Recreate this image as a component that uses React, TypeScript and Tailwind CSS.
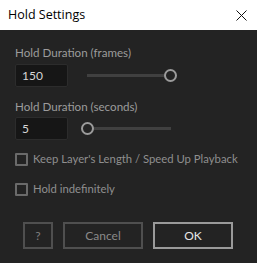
import React from 'react';

const font = { fontFamily: 'Lato, "Noto Sans", sans-serif' };

function Slider({ value }: { value: number }) {
  // value 0..1, thumb center travels 6px..90px inside a 96px wide box
  return (
    <div className="relative ml-[13px] h-[13px] w-[96px]">
      <div className="absolute left-[6px] right-[6px] top-[5px] h-[3px] bg-[#404040]" />
      <div
        className="absolute top-0 h-[13px] w-[13px] rounded-full border-2 border-[#9b9b9b] bg-[#232323]"
        style={{ left: `${value * 83}px` }}
      />
    </div>
  );
}

function NumberField({ value }: { value: string }) {
  return (
    <div className="flex h-[23px] w-[53px] items-center rounded-[2px] border border-[#2c2c2c] bg-[#161616] pl-[6px] text-[12px] text-[#d6d6d6]">
      {value}
    </div>
  );
}

function Checkbox({ label }: { label: string }) {
  return (
    <div className="flex items-center">
      <div className="h-[13px] w-[13px] shrink-0 rounded-[1px] border-2 border-[#6a6a6a]" />
      <span className="ml-[5px] whitespace-nowrap text-[11.3px] leading-[14px] text-[#8f8f8f]">{label}</span>
    </div>
  );
}

export default function App() {
  return (
    <div className="h-[263px] w-[257px] overflow-hidden" style={font}>
      {/* Title bar */}
      <div className="flex h-[30px] items-center justify-between bg-white pl-[8px] pr-[10px]">
        <span className="text-[12.5px] text-black" style={{ fontFamily: '"Open Sans", "Noto Sans", sans-serif' }}>
          Hold Settings
        </span>
        <svg width="11" height="11" viewBox="0 0 11 11" className="mt-[1px]">
          <path d="M0.5 0.5 L10.5 10.5 M10.5 0.5 L0.5 10.5" stroke="#111" strokeWidth="1" />
        </svg>
      </div>

      {/* Body */}
      <div className="flex h-[233px] flex-col bg-[#232323] px-[15px] pt-[15px]">
        <div className="whitespace-nowrap text-[11.6px] leading-[15px] text-[#9c9c9c]">Hold Duration (frames)</div>
        <div className="mt-[4px] flex items-center">
          <NumberField value="150" />
          <Slider value={1} />
        </div>

        <div className="mt-[12px] whitespace-nowrap text-[11.6px] leading-[15px] text-[#9c9c9c]">Hold Duration (seconds)</div>
        <div className="mt-[3px] flex items-center">
          <NumberField value="5" />
          <Slider value={0} />
        </div>

        <div className="mt-[12px]">
          <Checkbox label="Keep Layer's Length / Speed Up Playback" />
        </div>
        <div className="mt-[16px]">
          <Checkbox label="Hold indefinitely" />
        </div>

        <div className="ml-[8px] mt-[26px] flex gap-[10px]">
          <button className="flex h-[27px] w-[30px] items-center justify-center border-2 border-[#4f4f4f] text-[12px] text-[#7f7f7f]">
            ?
          </button>
          <button className="flex h-[27px] w-[80px] items-center justify-center border-2 border-[#4f4f4f] text-[12px] text-[#8a8a8a]">
            Cancel
          </button>
          <button className="flex h-[27px] w-[80px] items-center justify-center border-2 border-[#9a9a9a] text-[12px] text-[#e6e6e6]">
            OK
          </button>
        </div>
      </div>
    </div>
  );
}
